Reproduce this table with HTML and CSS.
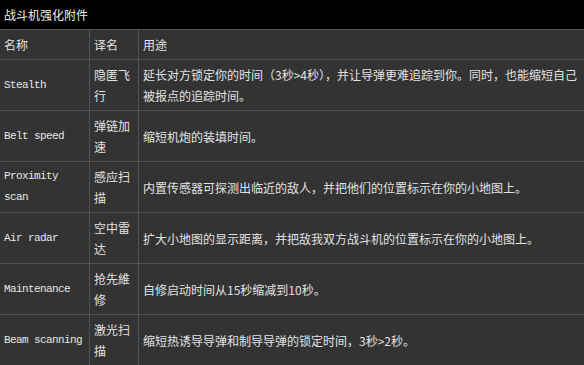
FILE: index.html
```html
<!DOCTYPE html>
<html lang="zh-CN">
<head>
<meta charset="utf-8">
<title>战斗机强化附件</title>
<link rel="stylesheet" href="styles.css">
</head>
<body>
<div class="title">战斗机强化附件</div>
<div class="grid">
  <div class="cell head">名称</div>
  <div class="cell head">译名</div>
  <div class="cell head">用途</div>

  <div class="cell en">Stealth</div>
  <div class="cell">隐匿飞行</div>
  <div class="cell">延长对方锁定你的时间（3秒&gt;4秒），并让导弹更难追踪到你。同时，也能缩短自己<br>被报点的追踪时间。</div>

  <div class="cell en">Belt speed</div>
  <div class="cell">弹链加速</div>
  <div class="cell">缩短机炮的装填时间。</div>

  <div class="cell en">Proximity scan</div>
  <div class="cell">感应扫描</div>
  <div class="cell">内置传感器可探测出临近的敌人，并把他们的位置标示在你的小地图上。</div>

  <div class="cell en">Air radar</div>
  <div class="cell">空中雷达</div>
  <div class="cell">扩大小地图的显示距离，并把敌我双方战斗机的位置标示在你的小地图上。</div>

  <div class="cell en">Maintenance</div>
  <div class="cell">抢先維修</div>
  <div class="cell">自修启动时间从15秒缩减到10秒。</div>

  <div class="cell en">Beam scanning</div>
  <div class="cell">激光扫描</div>
  <div class="cell">缩短热诱导导弹和制导导弹的锁定时间，3秒&gt;2秒。</div>
</div>
</body>
</html>
```
FILE: styles.css
```css
html, body {
  margin: 0;
  padding: 0;
  background: #333333;
  overflow: hidden;
}
body {
  width: 584px;
  height: 365px;
  font-family: "Noto Sans CJK SC", "Liberation Sans", sans-serif;
  font-size: 12px;
  color: #e2e2e2;
}
.title {
  height: 29px;
  line-height: 29px;
  background: #000000;
  color: #eeeeee;
  padding-left: 4px;
}
.grid {
  display: grid;
  grid-template-columns: 89px 48px 1fr;
  grid-template-rows: 29px repeat(6, 50px);
  gap: 1px;
  padding-top: 1px;
  background: #525252;
}
.cell {
  background: #333333;
  display: flex;
  align-items: center;
  padding: 0 2px 0 4px;
  line-height: 21px;
  min-width: 0;
}
.cell.en {
  font-family: "Liberation Mono", "DejaVu Sans Mono", monospace;
  font-size: 11px;
  letter-spacing: -0.6px;
  padding-right: 6px;
  color: #e6e6e6;
}
.cell.head {
  color: #e2e2e2;
}
```
